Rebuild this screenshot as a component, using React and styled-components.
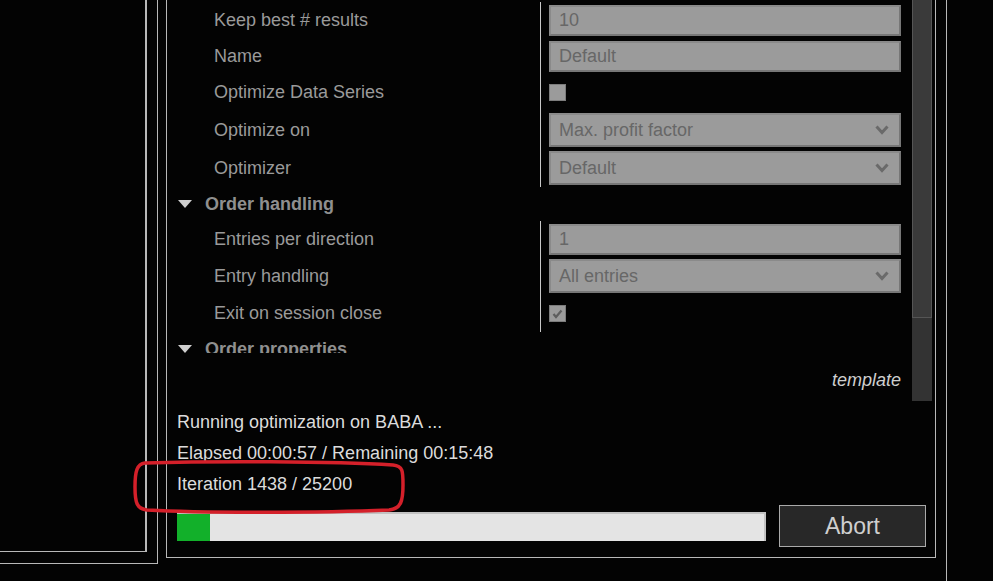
import React from 'react';
import styled, { createGlobalStyle } from 'styled-components';

const Global = createGlobalStyle`
    html, body {
        margin: 0;
        padding: 0;
        background: #030303;
        overflow: hidden;
    }
    body {
        font-family: "Liberation Sans", Arial, sans-serif;
    }
`;

const Screen = styled.div`
    position: relative;
    width: 993px;
    height: 581px;
    display: flex;
    background: #030303;
`;

const LeftOuter = styled.div`
    width: 157px;
    height: 563px;
    border-right: 1px solid #b8b8b8;
    border-bottom: 1px solid #b8b8b8;
    flex-shrink: 0;
`;

const LeftInner = styled.div`
    width: 145px;
    height: 551px;
    border-right: 2px solid #b8b8b8;
    border-bottom: 1px solid #b8b8b8;
`;

const Panel = styled.div`
    margin-left: 8px;
    width: 768px;
    height: 557px;
    border-left: 1px solid #b8b8b8;
    border-right: 1px solid #b8b8b8;
    border-bottom: 1px solid #b8b8b8;
    display: flex;
    flex-direction: column;
    flex-shrink: 0;
`;

const RightEdge = styled.div`
    margin-left: 10px;
    width: 1px;
    height: 581px;
    background: #b8b8b8;
`;

const Top = styled.div`
    display: flex;
    height: 401px;
`;

const GridArea = styled.div`
    flex: 1;
    display: flex;
    flex-direction: column;
    padding-left: 10px;
`;

const Grid = styled.div`
    height: 353px;
    padding-top: 2px;
    box-sizing: border-box;
    overflow: hidden;
`;

const Row = styled.div`
    display: flex;
    height: ${p => p.h}px;
`;

const Label = styled.div`
    width: 326px;
    padding-left: 37px;
    display: flex;
    align-items: center;
    color: #9a9a9a;
    font-size: 18px;
`;

const Value = styled.div`
    border-left: 1px solid #c8c8c8;
    padding-left: 8px;
    display: flex;
    align-items: center;
`;

const Field = styled.div`
    width: 352px;
    height: ${p => p.h || 31}px;
    box-sizing: border-box;
    background: #9b9b9b;
    border: 2px solid #777;
    border-top-color: #8a8a8a;
    border-left-color: #8a8a8a;
    display: flex;
    align-items: center;
    justify-content: space-between;
    padding: 0 10px 0 8px;
    color: #676767;
    font-size: 18px;
`;

const Check = styled.div`
    width: 17px;
    height: 17px;
    box-sizing: border-box;
    background: #9b9b9b;
    border: 1px solid #7c7c7c;
    display: flex;
    align-items: center;
    justify-content: center;
`;

const Header = styled.div`
    display: flex;
    align-items: center;
    height: ${p => p.h}px;
    padding-left: 1px;
    color: #8f8f8f;
    font-size: 18px;
    font-weight: bold;
`;

const Tri = styled.span`
    width: 0;
    height: 0;
    border-left: 7px solid transparent;
    border-right: 7px solid transparent;
    border-top: 8px solid #d0d0d0;
    margin-right: 13px;
`;

const Template = styled.div`
    margin-top: auto;
    align-self: flex-end;
    padding-bottom: 10px;
    color: #cfcfcf;
    font-style: italic;
    font-size: 18px;
`;

const Scroll = styled.div`
    width: 20px;
    margin-left: 11px;
    margin-right: 3px;
    background: #333;
    display: flex;
    flex-direction: column;
`;

const Thumb = styled.div`
    height: 318px;
    box-sizing: border-box;
    background: #3a3a3a;
    border: 1px solid #555;
    border-top: none;
`;

const Status = styled.div`
    padding: 6px 0 0 10px;
    display: flex;
    flex-direction: column;
    color: #dcdcdc;
    font-size: 18px;
`;

const StatusLine = styled.div`
    height: 31px;
    display: flex;
    align-items: center;
`;

const Bottom = styled.div`
    display: flex;
    align-items: center;
    padding-left: 10px;
    margin-top: 5px;
`;

const Bar = styled.div`
    width: 589px;
    height: 29px;
    box-sizing: border-box;
    background: #e4e4e4;
    border-top: 2px solid #c2c2c2;
    border-right: 2px solid #c2c2c2;
    display: flex;
`;

const Fill = styled.div`
    background: #12b02a;
    height: 100%;
`;

const Abort = styled.button`
    margin-left: 13px;
    width: 147px;
    height: 42px;
    background: #282828;
    border: 1px solid #aaa;
    color: #cfcfcf;
    font-family: "Liberation Sans", Arial, sans-serif;
    font-size: 23px;
    padding: 0;
`;

const Mark = styled.svg`
    position: absolute;
    left: 131px;
    top: 459px;
    pointer-events: none;
`;

const Chevron = () => (
    <svg width="14" height="10" viewBox="0 0 14 10">
        <path d="M1.5 1.5 L7 7.5 L12.5 1.5" fill="none" stroke="#6a6a6a" strokeWidth="3" />
    </svg>
);

const Tick = () => (
    <svg width="11" height="10" viewBox="0 0 11 10">
        <path d="M1.5 5 L4 8 L9.5 1.5" fill="none" stroke="#5e5e5e" strokeWidth="2.2" />
    </svg>
);

const Prop = ({ label, h, children }) => (
    <Row h={h}>
        <Label>{label}</Label>
        <Value>{children}</Value>
    </Row>
);

const App = () => {
    return (
        <Screen>
            <Global />
            <LeftOuter>
                <LeftInner />
            </LeftOuter>
            <Panel>
                <Top>
                    <GridArea>
                        <Grid>
                            <Prop label="Keep best # results" h={36}>
                                <Field>10</Field>
                            </Prop>
                            <Prop label="Name" h={36}>
                                <Field>Default</Field>
                            </Prop>
                            <Prop label="Optimize Data Series" h={37}>
                                <Check />
                            </Prop>
                            <Prop label="Optimize on" h={38}>
                                <Field h={34}>Max. profit factor<Chevron /></Field>
                            </Prop>
                            <Prop label="Optimizer" h={38}>
                                <Field h={34}>Default<Chevron /></Field>
                            </Prop>
                            <Header h={34}><Tri />Order handling</Header>
                            <Prop label="Entries per direction" h={36}>
                                <Field>1</Field>
                            </Prop>
                            <Prop label="Entry handling" h={38}>
                                <Field h={34}>All entries<Chevron /></Field>
                            </Prop>
                            <Prop label="Exit on session close" h={37}>
                                <Check><Tick /></Check>
                            </Prop>
                            <Header h={34}><Tri />Order properties</Header>
                        </Grid>
                        <Template>template</Template>
                    </GridArea>
                    <Scroll>
                        <Thumb />
                    </Scroll>
                </Top>
                <Status>
                    <StatusLine>Running optimization on BABA ...</StatusLine>
                    <StatusLine>Elapsed 00:00:57 / Remaining 00:15:48</StatusLine>
                    <StatusLine>Iteration 1438 / 25200</StatusLine>
                </Status>
                <Bottom>
                    <Bar>
                        <Fill style={{ width: `${(1438 / 25200) * 100}%` }} />
                    </Bar>
                    <Abort>Abort</Abort>
                </Bottom>
            </Panel>
            <RightEdge />
            <Mark width="276" height="56" viewBox="0 0 276 56">
                <path
                    d="M14 4 C80 2 200 2 262 6 C272 7 272 12 272 26 C272 42 270 50 258 51 C190 54 70 54 16 51 C6 50 4 44 4 28 C4 12 6 5 14 4 Z"
                    fill="none"
                    stroke="#d4202a"
                    strokeWidth="3.5"
                />
            </Mark>
        </Screen>
    );
};

export default App;
